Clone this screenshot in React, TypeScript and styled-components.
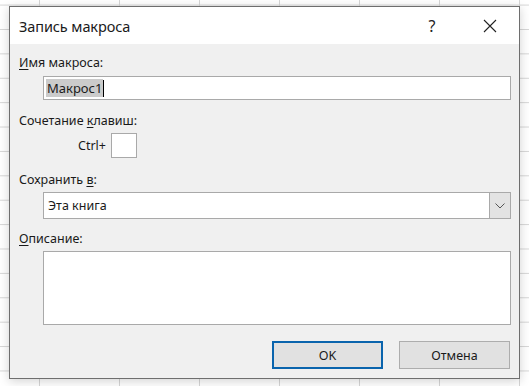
import styled, { createGlobalStyle } from 'styled-components';

const GlobalStyle = createGlobalStyle`
  html, body {
    margin: 0;
    padding: 0;
  }
  body {
    font-family: 'Noto Sans', 'Open Sans', Arial, sans-serif;
    color: #000;
  }
`;

const Sheet = styled.div`
  width: 529px;
  height: 386px;
  box-sizing: border-box;
  padding: 6px 0 0 9px;
  background-color: #fff;
  background-image: linear-gradient(to right, #d6d6d6 1px, transparent 1px),
    linear-gradient(to bottom, #d6d6d6 1px, transparent 1px);
  background-size: 80px 24.4px;
  background-position: 39px 4.6px;
  overflow: hidden;
`;

const Dialog = styled.div`
  width: 511px;
  box-sizing: border-box;
  border: 1px solid #6e6e6e;
  background: #f0f0f0;
  box-shadow: 0 2px 10px rgba(0, 0, 0, 0.18);
  display: flex;
  flex-direction: column;
`;

const TitleBar = styled.div`
  height: 37px;
  background: #fff;
  display: flex;
  align-items: center;
  padding-left: 9px;
`;

const Title = styled.div`
  flex: 1;
  font-size: 14.5px;
  color: #1a1a1a;
  letter-spacing: -0.1px;
`;

const TitleButton = styled.div`
  width: 58px;
  height: 37px;
  display: flex;
  align-items: center;
  justify-content: center;
  font-size: 16px;
  color: #222;
`;

const Body = styled.div`
  display: flex;
  flex-direction: column;
  padding: 9px 8px 9px 9px;
`;

const Label = styled.div<{ $top?: number }>`
  font-size: 12.5px;
  line-height: 20px;
  color: #1a1a1a;
  margin-top: ${(p) => p.$top ?? 0}px;
`;

const Key = styled.span`
  text-decoration: underline;
  text-underline-offset: 2px;
`;

const Field = styled.div<{ $top: number; $h: number }>`
  margin: ${(p) => p.$top}px 0 0 24px;
  height: ${(p) => p.$h}px;
  box-sizing: border-box;
  border: 1px solid #a9a9a9;
  background: #fff;
  display: flex;
  align-items: center;
  font-size: 12.5px;
  color: #1a1a1a;
`;

const Selected = styled.span`
  background: #cbcbcb;
  margin-left: 2px;
  padding: 0 1px;
  font-size: 13px;
  line-height: 18px;
`;

const Caret = styled.span`
  display: inline-block;
  width: 1px;
  height: 17px;
  background: #000;
`;

const ShortcutRow = styled.div`
  margin: 2px 0 0 59px;
  display: flex;
  align-items: center;
  gap: 5px;
  font-size: 12.5px;
  color: #1a1a1a;
`;

const KeyBox = styled.div`
  width: 26px;
  height: 25px;
  box-sizing: border-box;
  border: 1px solid #a9a9a9;
  background: #fff;
`;

const SelectText = styled.div`
  flex: 1;
  padding-left: 4px;
`;

const DropButton = styled.div`
  width: 21px;
  align-self: stretch;
  box-sizing: border-box;
  border-left: 1px solid #a9a9a9;
  background: #e3e3e3;
  display: flex;
  align-items: center;
  justify-content: center;
`;

const Buttons = styled.div`
  margin-top: 16px;
  display: flex;
  justify-content: flex-end;
  gap: 16px;
  padding-right: 1px;
`;

const Button = styled.div<{ $primary?: boolean }>`
  width: 111px;
  height: 28px;
  box-sizing: border-box;
  border: ${(p) => (p.$primary ? '2px solid #0a64ad' : '1px solid #adadad')};
  background: #e1e1e1;
  display: flex;
  align-items: center;
  justify-content: center;
  font-size: 12.5px;
  color: #1a1a1a;
`;

export default function App() {
  return (
    <>
      <GlobalStyle />
      <Sheet>
        <Dialog>
          <TitleBar>
            <Title>Запись макроса</Title>
            <TitleButton>?</TitleButton>
            <TitleButton>
              <svg width="14" height="14" viewBox="0 0 14 14">
                <path d="M1 1 L13 13 M13 1 L1 13" stroke="#222" strokeWidth="1.1" fill="none" />
              </svg>
            </TitleButton>
          </TitleBar>
          <Body>
            <Label>
              <Key>И</Key>мя макроса:
            </Label>
            <Field $top={3} $h={24}>
              <Selected>Макрос1</Selected>
              <Caret />
            </Field>
            <Label $top={11}>
              Сочетание <Key>к</Key>лавиш:
            </Label>
            <ShortcutRow>
              Ctrl+
              <KeyBox />
            </ShortcutRow>
            <Label $top={12}>
              Сохранить <Key>в</Key>:
            </Label>
            <Field $top={2} $h={27}>
              <SelectText>Эта книга</SelectText>
              <DropButton>
                <svg width="10" height="6" viewBox="0 0 10 6">
                  <path d="M0.5 0.5 L5 5 L9.5 0.5" stroke="#555" strokeWidth="1" fill="none" />
                </svg>
              </DropButton>
            </Field>
            <Label $top={10}>
              <Key>О</Key>писание:
            </Label>
            <Field $top={2} $h={74} />
            <Buttons>
              <Button $primary>OK</Button>
              <Button>Отмена</Button>
            </Buttons>
          </Body>
        </Dialog>
      </Sheet>
    </>
  );
}
